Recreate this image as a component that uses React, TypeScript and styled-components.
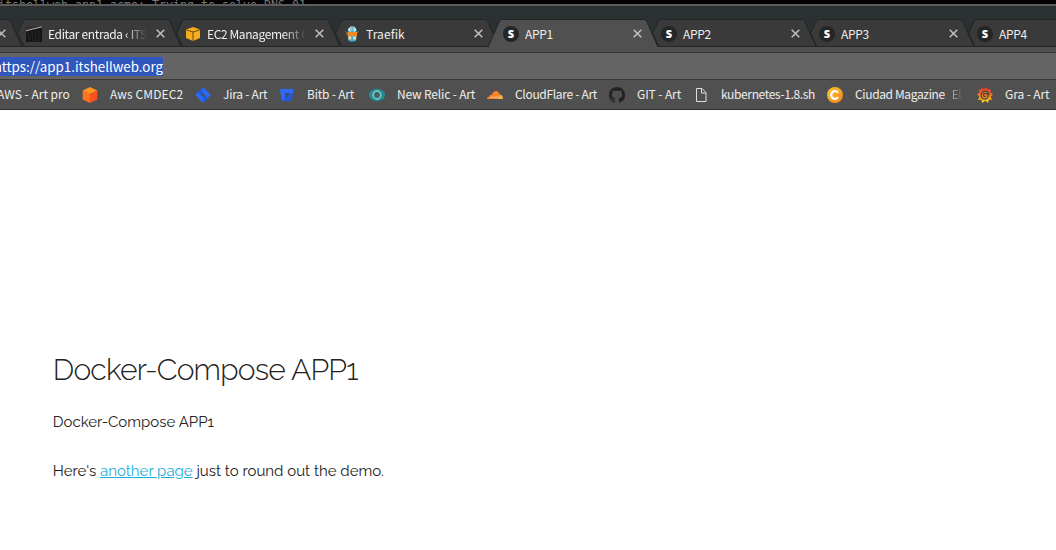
import React from 'react';
import styled, { createGlobalStyle } from 'styled-components';

const Global = createGlobalStyle`
  * { box-sizing: border-box; }
  html, body { margin: 0; background: #fff; overflow: hidden; }
`;

const Window = styled.div`
  width: 1056px;
  height: 550px;
  display: flex;
  flex-direction: column;
  overflow: hidden;
  font-family: 'Noto Sans CJK SC', sans-serif;
  font-size: 12px;
  color: #eee;
`;

const Terminal = styled.div`
  height: 4px;
  flex: none;
  background: #030303;
  overflow: hidden;
  display: flex;
  align-items: flex-start;
  font: 11.63px/14px 'DejaVu Sans Mono', monospace;
  color: #777;
  white-space: pre;
  span { margin: -2px 0 0 -2px; }
`;

const TabStrip = styled.div`
  height: 43px;
  flex: none;
  border-top: 2px solid #5c5c5c;
  padding-top: 13px;
  background: #2b3033;
  display: flex;
`;

const TabBox = styled.div<{ $active?: boolean; $w: number }>`
  position: relative;
  z-index: ${p => (p.$active ? 2 : 1)};
  width: ${p => p.$w}px;
  height: 28px;
  flex: none;
  display: flex;
  align-items: center;
  padding: 1px 0 0 1px;
  &:first-child { margin-left: -134px; }
`;

const Edge = styled.svg`
  position: absolute;
  left: -14px;
  top: 0;
  z-index: -1;
  overflow: visible;
`;

const Favicon = styled.span`
  width: 16px;
  height: 16px;
  margin-right: 6px;
  flex: none;
  svg { display: block; }
`;

const TabTitle = styled.span<{ $fade?: boolean; $track?: number }>`
  width: 99px;
  overflow: hidden;
  white-space: nowrap;
  line-height: 18px;
  letter-spacing: ${p => p.$track ?? 0}px;
  ${p => p.$fade && 'mask-image: linear-gradient(90deg, #000 78%, transparent 100%);'}
`;

const Close = styled.svg`
  margin-left: 9px;
  flex: none;
`;

const Toolbar = styled.div`
  height: 6px;
  flex: none;
  background: #505050;
  border-bottom: 1px solid #3a3a3a;
`;

const AddressBar = styled.div`
  height: 27px;
  flex: none;
  background: #646464;
  border-bottom: 1px solid #3a3a3a;
  padding-top: 4px;
`;

const Url = styled.span`
  width: 163px;
  height: 19px;
  background: #2f57bd;
  overflow: hidden;
  font-size: 13.33px;
  line-height: 19.5px;
  display: flex;
  justify-content: flex-end;
  color: #fff;
  white-space: nowrap;
`;

const Bookmarks = styled.div`
  height: 30px;
  flex: none;
  background: #505050;
  border-bottom: 1px solid #303030;
  display: flex;
  align-items: center;
`;

const Bookmark = styled.div<{ $w: number }>`
  width: ${p => p.$w}px;
  flex: none;
  display: flex;
  align-items: center;
  white-space: nowrap;
  line-height: 18px;
`;

const BookmarkLabel = styled.span<{ $bare?: boolean; $track?: number }>`
  margin: 0 0 1px ${p => (p.$bare ? -3 : 12)}px;
  letter-spacing: ${p => p.$track ?? 0}px;
`;

const Faded = styled.span`
  margin: 0 0 1px 7px;
  letter-spacing: -0.6px;
  background: linear-gradient(90deg, #aaa, #666);
  background-clip: text;
  color: transparent;
`;

const Page = styled.main`
  flex: 1;
  background: #fff;
  padding: 239.6px 0 0 52.8px;
  font-family: Raleway, Lato, sans-serif;
  color: #222;
`;

const Heading = styled.h1`
  margin: 0 0 20px;
  font-size: 30px;
  line-height: 40.5px;
  font-weight: 300;
  letter-spacing: -0.8px;
`;

const Paragraph = styled.p`
  margin: 0 0 25px;
  font-size: 15px;
  line-height: 24px;
`;

const Link = styled.a`
  color: #1eaedb;
  text-decoration: underline;
`;

const Svg = (p: { children: React.ReactNode }) => (
  <svg width="16" height="16" viewBox="0 0 16 16">{p.children}</svg>
);

const SIcon = () => (
  <Svg>
    <circle cx="8" cy="8" r="8" fill="#252525" />
    <text x="8" y="11.8" textAnchor="middle" fontFamily="Open Sans" fontSize="11" fontWeight="800" fill="#fff">S</text>
  </Svg>
);

const Photo = () => (
  <Svg>
    <rect width="16" height="16" fill="#151515" />
    <path d="M0 0H16V1L0 5Z" fill="#333" />
    <path d="M0 4.800L16 .8" stroke="#b5b5b5" strokeWidth="1" />
    <path d="M2 6l2 10M5.500 5l2 11M9 5l1.500 11M12.500 4l1 12" stroke="#303030" strokeWidth=".7" />
  </Svg>
);

const Ec2 = () => (
  <Svg>
    <path d="M1 3.500L8 1l7 2.500V12l-7 3-7-3Z" fill="#f6ac1d" />
    <path d="M1 3.800L8 6l7-2.200M8 6v9" fill="none" stroke="#6b4c17" strokeWidth="1" />
  </Svg>
);

const Gopher = () => (
  <Svg>
    <path d="M1.500 5l2.500 4M14.500 5L12 9" stroke="#7a6b35" strokeWidth="1.300" />
    <rect x="4" y="1" width="8.500" height="14.500" rx="3" fill="#3cadc4" />
    <path d="M3.500 6h9.500v4.500H3.500Z" fill="#ee8a22" />
    <path d="M4.500 10.500h7.500v3H4.500Z" fill="#eed3a5" />
    <path d="M7.300 10h1.800v5.500H7.300Z" fill="#3cadc4" />
    <circle cx="6" cy="3.800" r="1.700" fill="#fff" /><circle cx="10.300" cy="3.800" r="1.700" fill="#fff" />
    <circle cx="6.300" cy="3.800" r=".6" fill="#222" /><circle cx="9.900" cy="3.800" r=".6" fill="#222" />
    <path d="M6 1h4.500" stroke="#c9dfe4" />
  </Svg>
);

const Cube = () => (
  <Svg>
    <path d="M8 0l7.300 3.500L8 7 .7 3.500Z" fill="#ff9420" />
    <path d="M.7 3.500L8 7v9L.7 12.500Z" fill="#ff7420" />
    <path d="M15.300 3.500L8 7v9l7.300-3.500Z" fill="#fb4f1e" />
  </Svg>
);

const Jira = () => (
  <Svg>
    <path d="M8 .3L15.700 8 8 15.700.3 8Z" fill="#2a6cff" />
    <path d="M8 .3v5L5.500 8 3 5.300ZM8 15.700v-5L10.500 8 13 10.700Z" fill="#1f5ce6" />
    <path d="M8 5.700L10.300 8 8 10.300 5.700 8Z" fill="#505050" />
  </Svg>
);

const Bitbucket = () => (
  <Svg>
    <path d="M1 2h13.500l-2 12H3Z" fill="#2d6bff" />
    <path d="M10 6h4l-1.400 8H3.500l3-4h3Z" fill="#1c50cc" opacity=".65" />
    <path d="M5.700 6h4.400l-.7 4H6.500Z" fill="#3f4b68" />
  </Svg>
);

const NewRelic = () => (
  <Svg>
    <ellipse cx="8" cy="8" rx="8" ry="6.200" fill="#268b95" />
    <circle cx="8" cy="8" r="3.800" fill="#4b5759" stroke="#6fcdd0" strokeWidth="1.700" />
    <circle cx="8" cy="8" r="1.500" fill="#46686b" />
  </Svg>
);

const CloudFlare = () => (
  <Svg>
    <path d="M0 12c0-1.700 1-2.500 2.400-2.600C2.800 7.700 4 7.600 4.800 8 5.600 5.200 7.300 4 9 4c2 0 3.200 1.300 3.500 3.300L11 12Z" fill="#f6822a" />
    <path d="M10.800 12l1.800-4.500c2.200 0 3.400 1.700 3.400 4.500Z" fill="#fbad49" />
    <path d="M3 10.200h9" stroke="#ffd7a6" strokeWidth=".7" />
  </Svg>
);

const GitHub = () => (
  <Svg>
    <path fill="#222" d="M8 0C3.580 0 0 3.580 0 8c0 3.540 2.290 6.530 5.470 7.590.4.070.55-.17.55-.38 0-.19-.01-.82-.01-1.490-2.010.37-2.530-.49-2.690-.94-.09-.23-.48-.94-.82-1.130-.28-.15-.68-.52-.01-.53.63-.01 1.080.58 1.230.82.72 1.210 1.870.87 2.330.66.07-.52.28-.87.51-1.070-1.780-.2-3.640-.89-3.640-3.950 0-.87.31-1.590.82-2.150-.08-.2-.36-1.020.08-2.120 0 0 .67-.21 2.200.82.64-.18 1.320-.27 2-.27s1.360.09 2 .27c1.530-1.040 2.200-.82 2.200-.82.44 1.100.16 1.920.08 2.120.51.56.82 1.270.82 2.150 0 3.070-1.870 3.750-3.650 3.950.29.25.54.73.54 1.480 0 1.070-.01 1.930-.01 2.200 0 .21.15.46.55.38A8.010 8.010 0 0 0 16 8c0-4.420-3.580-8-8-8Z" />
  </Svg>
);

const FileIcon = () => (
  <Svg>
    <path d="M3.500 1.500h5.500l4 4v9h-9.500Z M8.500 1.500v4.500h4.500" fill="none" stroke="#ddd" strokeWidth="1" />
  </Svg>
);

const Ciudad = () => (
  <Svg>
    <defs>
      <linearGradient id="cm" x1="0" y1="0" x2="1" y2="1">
        <stop offset="0" stopColor="#fcc52a" /><stop offset="1" stopColor="#f4831c" />
      </linearGradient>
    </defs>
    <circle cx="8" cy="8" r="8" fill="url(#cm)" />
    <path d="M11 5.700A3.800 3.800 0 1 0 11 10.300" fill="none" stroke="#fff" strokeWidth="2.300" />
  </Svg>
);

const Grafana = () => (
  <Svg>
    <defs>
      <linearGradient id="gf" x1="0" y1="0" x2="0" y2="1">
        <stop offset="0" stopColor="#ee3524" /><stop offset=".45" stopColor="#f4701f" /><stop offset="1" stopColor="#fde01a" />
      </linearGradient>
    </defs>
    <path fill="url(#gf)" d="M4 .3L6.800 2.300 9.500 0l1.500 2.700L14 2l-.6 3.200L16 7.500 13.700 9.500l1.300 3.300-3-.1-1 3L8.300 13.700 5 16l-.5-3.200-3.500-.1 1.300-3L0 7l2.600-1.500L1.500 2.300l2.800.5Z" />
    <path d="M12.300 7.500C11.500 3.800 7.500 3.200 5.300 5.300 3 7.700 4 11.800 7.500 12.100c2 .1 3.600-1.300 3.600-3.200 0-3.500-4.900-3.300-4.600-.5.1 1.200 1.700 1.600 2.300.5" fill="none" stroke="#4c4744" strokeWidth="1.300" />
  </Svg>
);

type TabData = {
  title: string;
  icon: React.ReactNode;
  w: number;
  active?: boolean;
  fade?: boolean;
  track?: number;
};

const tabs: TabData[] = [
  { title: '', icon: null, w: 159 },
  { title: 'Editar entrada ‹ ITSH', icon: <Photo />, w: 159, fade: true, track: -0.36 },
  { title: 'EC2 Management Co', icon: <Ec2 />, w: 159, fade: true, track: -0.4 },
  { title: 'Traefik', icon: <Gopher />, w: 159, track: 0.1 },
  { title: 'APP1', icon: <SIcon />, w: 158, active: true, track: -0.3 },
  { title: 'APP2', icon: <SIcon />, w: 158, track: -0.3 },
  { title: 'APP3', icon: <SIcon />, w: 158, track: -0.3 },
  { title: 'APP4', icon: <SIcon />, w: 158, track: -0.3 },
];

const Tab = ({ tab }: { tab: TabData }) => (
  <TabBox $active={tab.active} $w={tab.w}>
    <Edge width="172" height="28">
      <path
        d={tab.active ? 'M0 28L11.500 2Q12.500 .5 14 .5H156Q157.500 .5 158.500 2L170 28Z' : 'M6.500 14L12.500 2Q13.500 .5 15 .5H156Q157.500 .5 158.500 2L170 27.500H13Z'}
        fill={tab.active ? '#505050' : '#3a3a3a'}
      />
      <path
        d={tab.active ? 'M0 28L11.500 2Q12.500 .5 14 .5H156Q157.500 .5 158.500 2L170 28' : 'M6.500 14L12.500 2Q13.500 .5 15 .5H156Q157.500 .5 158.500 2L170 27.500H13L6.500 14'}
        fill="none"
        stroke="#222526"
      />
    </Edge>
    <Favicon>{tab.icon}</Favicon>
    <TabTitle $fade={tab.fade} $track={tab.track}>{tab.title}</TabTitle>
    <Close width="9" height="9" viewBox="0 0 9 9">
      <path d="M.7 .7L8.300 8.300M8.300 .7L.7 8.300" stroke="#c0c0c0" strokeWidth="1.500" />
    </Close>
  </TabBox>
);

const bookmarks = [
  { w: 82, label: 'AWS - Art pro', icon: null },
  { w: 113, label: 'Aws CMDEC2', icon: <Cube />, track: 0.1 },
  { w: 84, label: 'Jira - Art', icon: <Jira />, track: -0.25 },
  { w: 90, label: 'Bitb - Art', icon: <Bitbucket />, track: -0.2 },
  { w: 118, label: 'New Relic - Art', icon: <NewRelic />, track: -0.17 },
  { w: 122, label: 'CloudFlare - Art', icon: <CloudFlare />, track: -0.32 },
  { w: 84, label: 'GIT - Art', icon: <GitHub />, track: -0.1 },
  { w: 134, label: 'kubernetes-1.8.sh', icon: <FileIcon />, track: -0.36 },
  { w: 150, label: 'Ciudad Magazine', icon: <Ciudad />, more: 'El', track: -0.37 },
  { w: 90, label: 'Gra - Art', icon: <Grafana />, track: -0.1 },
];

export default function App() {
  return (
    <Window>
      <Global />
      <Terminal><span>itshellweb.app1.acme: Trying to solve DNS-01</span></Terminal>
      <TabStrip>{tabs.map((t, i) => <Tab key={i} tab={t} />)}</TabStrip>
      <Toolbar />
      <AddressBar><Url>https://app1.itshellweb.org</Url></AddressBar>
      <Bookmarks>
        {bookmarks.map(b => (
          <Bookmark key={b.label} $w={b.w}>
            {b.icon}
            <BookmarkLabel $bare={!b.icon} $track={b.track}>{b.label}</BookmarkLabel>
            {b.more && <Faded>{b.more}</Faded>}
          </Bookmark>
        ))}
      </Bookmarks>
      <Page>
        <Heading>Docker-Compose APP1</Heading>
        <Paragraph>Docker-Compose APP1</Paragraph>
        <Paragraph>Here's <Link href="#">another page</Link> just to round out the demo.</Paragraph>
      </Page>
    </Window>
  );
}
